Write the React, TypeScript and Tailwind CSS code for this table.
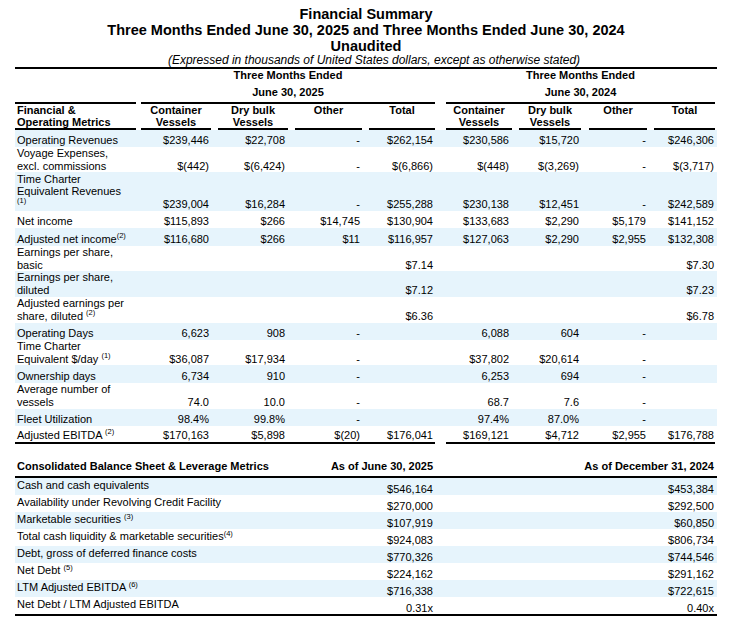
import React from 'react'

const BAND = 'bg-[#e6f4fc]'

// right padding of each value column (col width incl. gap to next column)
const valPr = ['pr-[9px]', 'pr-[10px]', 'pr-[9px]', 'pr-[13px]', 'pr-[10px]', 'pr-[10px]', 'pr-[8px]', 'pr-[3px]']
const hdrMr = ['mr-[7px]', 'mr-[7px]', 'mr-[7px]', 'mr-[11px]', 'mr-[7px]', 'mr-[8px]', 'mr-[7px]', 'mr-[2px]']
const grid = 'grid grid-cols-[126px_77px_77px_74px_77px_73px_70px_65px_63px] ml-[15px] w-[702px]'

const Sup = ({ children }: { children: React.ReactNode }) => (
  <sup className="text-[7.5px] top-[-0.6em]">{children}</sup>
)

const headers = [
  ['Container', 'Vessels'],
  ['Dry bulk', 'Vessels'],
  ['Other'],
  ['Total'],
  ['Container', 'Vessels'],
  ['Dry bulk', 'Vessels'],
  ['Other'],
  ['Total'],
]

type Row = { label: React.ReactNode[]; h: string; vals: string[] }

const rows: Row[] = [
  { label: ['Operating Revenues'], h: 'h-[17px]', vals: ['$239,446', '$22,708', '-', '$262,154', '$230,586', '$15,720', '-', '$246,306'] },
  { label: ['Voyage Expenses,', 'excl. commissions'], h: 'h-[25px]', vals: ['$(442)', '$(6,424)', '-', '$(6,866)', '$(448)', '$(3,269)', '-', '$(3,717)'] },
  { label: ['Time Charter', 'Equivalent Revenues', <Sup>(1)</Sup>], h: 'h-[39px]', vals: ['$239,004', '$16,284', '-', '$255,288', '$230,138', '$12,451', '-', '$242,589'] },
  { label: ['Net income'], h: 'h-[17px]', vals: ['$115,893', '$266', '$14,745', '$130,904', '$133,683', '$2,290', '$5,179', '$141,152'] },
  { label: [<>Adjusted net income<Sup>(2)</Sup></>], h: 'h-[18px]', vals: ['$116,680', '$266', '$11', '$116,957', '$127,063', '$2,290', '$2,955', '$132,308'] },
  { label: ['Earnings per share,', 'basic'], h: 'h-[25px]', vals: ['', '', '', '$7.14', '', '', '', '$7.30'] },
  { label: ['Earnings per share,', 'diluted'], h: 'h-[26px]', vals: ['', '', '', '$7.12', '', '', '', '$7.23'] },
  { label: ['Adjusted earnings per', <>share, diluted <Sup>(2)</Sup></>], h: 'h-[26px]', vals: ['', '', '', '$6.36', '', '', '', '$6.78'] },
  { label: ['Operating Days'], h: 'h-[17px]', vals: ['6,623', '908', '-', '', '6,088', '604', '-', ''] },
  { label: ['Time Charter', <>Equivalent $/day <Sup>(1)</Sup></>], h: 'h-[25px]', vals: ['$36,087', '$17,934', '-', '', '$37,802', '$20,614', '-', ''] },
  { label: ['Ownership days'], h: 'h-[18px]', vals: ['6,734', '910', '-', '', '6,253', '694', '-', ''] },
  { label: ['Average number of', 'vessels'], h: 'h-[26px]', vals: ['74.0', '10.0', '-', '', '68.7', '7.6', '-', ''] },
  { label: ['Fleet Utilization'], h: 'h-[17px]', vals: ['98.4%', '99.8%', '-', '', '97.4%', '87.0%', '-', ''] },
  { label: [<>Adjusted EBITDA <Sup>(2)</Sup></>], h: 'h-[16px]', vals: ['$170,163', '$5,898', '$(20)', '$176,041', '$169,121', '$4,712', '$2,955', '$176,788'] },
]

const balance: { label: React.ReactNode; a: string; b: string }[] = [
  { label: 'Cash and cash equivalents', a: '$546,164', b: '$453,384' },
  { label: 'Availability under Revolving Credit Facility', a: '$270,000', b: '$292,500' },
  { label: <>Marketable securities <Sup>(3)</Sup></>, a: '$107,919', b: '$60,850' },
  { label: <>Total cash liquidity &amp; marketable securities<Sup>(4)</Sup></>, a: '$924,083', b: '$806,734' },
  { label: 'Debt, gross of deferred finance costs', a: '$770,326', b: '$744,546' },
  { label: <>Net Debt <Sup>(5)</Sup></>, a: '$224,162', b: '$291,162' },
  { label: <>LTM Adjusted EBITDA <Sup>(6)</Sup></>, a: '$716,338', b: '$722,615' },
  { label: 'Net Debt / LTM Adjusted EBITDA', a: '0.31x', b: '0.40x' },
]

export default function App() {
  return (
    <div className="w-[732px] h-[625px] bg-white text-black font-['Liberation_Sans',Arial,sans-serif] overflow-hidden">
      {/* Title */}
      <div className="pt-[6px] text-center text-[14.5px] font-bold leading-[16px]">
        <div>Financial Summary</div>
        <div>Three Months Ended June 30, 2025 and Three Months Ended June 30, 2024</div>
        <div>Unaudited</div>
      </div>
      <div className="ml-[15px] w-[702px] pl-[16px] border-b-2 border-black text-center text-[12px] italic leading-[13px]">
        (Expressed in thousands of United States dollars, except as otherwise stated)
      </div>

      {/* Period header */}
      <div className={`${grid} text-[11px] font-bold`}>
        <div className="mr-[5px] border-b-2 border-black" />
        <div className="col-span-4 mr-[11px] border-b-2 border-black text-center leading-[13px] pb-[3px]">
          <div>Three Months Ended</div>
          <div className="mt-[4px]">June 30, 2025</div>
        </div>
        <div className="col-span-4 mr-[2px] border-b-2 border-black text-center leading-[13px] pb-[3px]">
          <div>Three Months Ended</div>
          <div className="mt-[4px]">June 30, 2024</div>
        </div>
      </div>

      {/* Column header */}
      <div className={`${grid} text-[11px] font-bold leading-[12px]`}>
        <div className="mr-[5px] border-b-2 border-black pl-[2px] h-[26px] whitespace-nowrap">
          <div>Financial &amp;</div>
          <div>Operating Metrics</div>
        </div>
        {headers.map((h, i) => (
          <div key={i} className={`${hdrMr[i]} border-b-2 border-black text-center whitespace-nowrap`}>
            {h.map((t) => (
              <div key={t}>{t}</div>
            ))}
          </div>
        ))}
      </div>

      {/* Body */}
      {rows.map((r, ri) => (
        <div key={ri} className={`${grid} ${r.h} ${ri % 2 === 0 ? BAND : ''} text-[11px] leading-[12.5px]`}>
          <div className="flex flex-col justify-end pl-[2px] pb-[1px] whitespace-nowrap">
            {r.label.map((l, li) => (
              <div key={li}>{l}</div>
            ))}
          </div>
          {r.vals.map((v, vi) => (
            <div key={vi} className={`flex items-end justify-end pb-[1px] ${valPr[vi]} whitespace-nowrap`}>
              {v}
            </div>
          ))}
        </div>
      ))}
      <div className={`${grid} h-[2px]`}>
        <div className="col-span-5 mr-[11px] bg-black" />
        <div className="col-span-4 mr-[2px] bg-black" />
      </div>

      {/* Balance sheet */}
      <div className="ml-[15px] w-[702px] mt-[16px] text-[11px]">
        <div className="grid grid-cols-[320px_100px_282px] font-bold leading-[13px] pb-[3px] border-b-2 border-black whitespace-nowrap">
          <div className="pl-[2px]">Consolidated Balance Sheet &amp; Leverage Metrics</div>
          <div className="flex justify-end pr-[2px]">As of June 30, 2025</div>
          <div className="flex justify-end pr-[3px]">As of December 31, 2024</div>
        </div>
        <div className="border-b-2 border-black">
          {balance.map((b, i) => (
            <div key={i} className={`grid grid-cols-[320px_100px_282px] h-[17px] leading-[12.5px] ${i % 2 === 0 ? BAND : ''}`}>
              <div className="self-start pt-[1px] pl-[2px] whitespace-nowrap">{b.label}</div>
              <div className="self-end text-right pr-[2px]">{b.a}</div>
              <div className="self-end text-right pr-[3px]">{b.b}</div>
            </div>
          ))}
        </div>
      </div>
    </div>
  )
}
